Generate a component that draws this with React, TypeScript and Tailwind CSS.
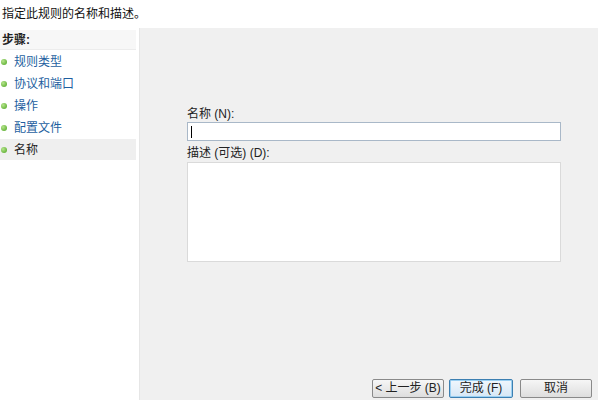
import React from "react";

const font = { fontFamily: '"Liberation Sans", "Noto Sans CJK SC", sans-serif' };

function Bullet() {
  return (
    <span className="inline-block w-[6px] h-[6px] rounded-full bg-[radial-gradient(circle_at_35%_35%,#b6e58c,#4aa31f)]" />
  );
}

const steps = ["规则类型", "协议和端口", "操作", "配置文件"];

export default function App() {
  return (
    <div className="w-[598px] h-[400px] bg-white flex flex-col overflow-hidden text-[12px]" style={font}>
      <div className="h-[28px] flex items-center pl-[2px] text-[#111] shrink-0">指定此规则的名称和描述。</div>
      <div className="flex flex-1 min-h-0">
        <div className="w-[139px] shrink-0 bg-white flex flex-col">
          <div className="h-[20px] mt-[2px] mr-[3px] bg-[#f7f7f7] border-b border-[#ececec] flex items-center pl-[2px] font-bold text-[#222]">步骤:</div>
          <div className="flex flex-col mr-[3px] mt-[1px]">
            {steps.map((s) => (
              <div key={s} className="h-[22px] flex items-center gap-[7px] pl-[1px] text-[#1e5fa0]">
                <Bullet />
                <span>{s}</span>
              </div>
            ))}
            <div className="h-[21px] flex items-center gap-[7px] pl-[1px] bg-[#efefef] text-[#222]">
              <Bullet />
              <span>名称</span>
            </div>
          </div>
        </div>
        <div className="flex-1 bg-[#f0f0f0] border-l border-[#e6e6e6] flex flex-col">
          <div className="flex-1 pt-[79px] pl-[47px] pr-[37px] flex flex-col">
            <div className="text-[#222] h-[14px] leading-[14px]">名称 (N):</div>
            <div className="mt-[1px] h-[19px] bg-white border border-[#a9b8c8] flex items-center pl-[3px]">
              <span className="w-[1px] h-[12px] bg-black" />
            </div>
            <div className="mt-[5px] text-[#222] h-[14px] leading-[14px]">描述 (可选) (D):</div>
            <div className="mt-[2px] h-[100px] bg-white border border-[#dadada]" />
          </div>
          <div className="flex justify-end items-center gap-[5px] pr-[6px] pb-[1px] h-[23px]">
            <button className="w-[72px] h-[19px] rounded-[2px] border border-[#8a8a8a] bg-[linear-gradient(#f6f6f6,#dedede)] text-[#222] text-[12px] leading-none">&lt; 上一步 (B)</button>
            <button className="w-[64px] h-[19px] rounded-[2px] border border-[#3c7fb1] bg-[linear-gradient(#f0f7fd,#d6e7f5)] text-[#222] text-[12px] leading-none shadow-[inset_0_0_0_1px_#9bd0f2]">完成 (F)</button>
            <button className="w-[72px] h-[19px] ml-[2px] rounded-[2px] border border-[#8a8a8a] bg-[linear-gradient(#f6f6f6,#dedede)] text-[#222] text-[12px] leading-none">取消</button>
          </div>
        </div>
      </div>
    </div>
  );
}
